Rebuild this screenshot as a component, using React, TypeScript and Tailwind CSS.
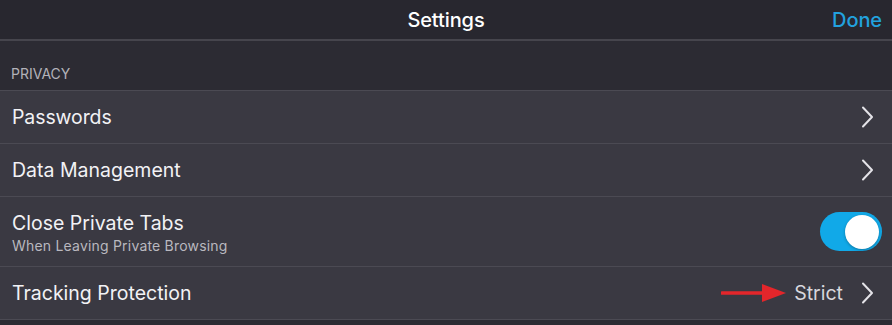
import React from "react";

function Chevron() {
  return (
    <svg width="13" height="22" viewBox="0 0 13 22" fill="none" className="shrink-0">
      <path d="M2 1.5 L11 11 L2 20.5" stroke="#e4e3e8" strokeWidth="2" strokeLinecap="round" strokeLinejoin="round" />
    </svg>
  );
}

function Row({ children, h = "h-[53px]" }: { children: React.ReactNode; h?: string }) {
  return (
    <div className={`${h} border-t border-[#4b4a53] bg-[#3a3942] flex items-center pl-[12px] pr-[18px]`}>
      {children}
    </div>
  );
}

export default function App() {
  return (
    <div
      className="w-[892px] h-[325px] overflow-hidden bg-[#2c2b33] text-white"
      style={{ fontFamily: "Inter, 'Noto Sans', sans-serif" }}
    >
      <div className="h-[39px] bg-[#28272f] grid grid-cols-[1fr_auto_1fr] items-center">
        <div />
        <div className="text-[20px] font-medium text-white tracking-[-0.1px]">Settings</div>
        <div className="justify-self-end pr-[10px] text-[20px] font-medium text-[#22a2df] tracking-[-0.1px]">Done</div>
      </div>
      <div className="h-[2px] bg-[#46454d]" />
      <div className="h-[49px] flex items-end pb-[6px] pl-[11px] text-[14px] text-[#b3b2b9]">PRIVACY</div>
      <Row>
        <span className="text-[19.5px] pt-[2px] text-[#f2f2f5] flex-1 tracking-[-0.1px]">Passwords</span>
        <Chevron />
      </Row>
      <Row>
        <span className="text-[19.5px] pt-[2px] text-[#f2f2f5] flex-1">Data Management</span>
        <Chevron />
      </Row>
      <Row h="h-[70px]">
        <div className="flex-1 flex flex-col pt-[2px]">
          <span className="text-[19.5px] leading-[24px] text-[#f2f2f5]">Close Private Tabs</span>
          <span className="text-[14px] leading-[18px] mt-[2px] text-[#b9b8bf] tracking-[0.2px]">When Leaving Private Browsing</span>
        </div>
        <div className="w-[62px] h-[39px] rounded-full bg-[#11a9e8] flex items-center justify-end pr-[3px] -mr-[8px]">
          <div className="w-[34px] h-[34px] rounded-full bg-white shadow-[0_1px_3px_rgba(0,0,0,0.3)]" />
        </div>
      </Row>
      <Row>
        <span className="text-[19.5px] pt-[2px] text-[#f2f2f5] flex-1">Tracking Protection</span>
        <div className="flex items-center">
          <svg width="66" height="22" viewBox="0 0 66 22" className="mr-[7px]">
            <line x1="1" y1="11" x2="44" y2="11" stroke="#e3262b" strokeWidth="3.5" strokeLinecap="round" />
            <polygon points="41,2 65,11 41,20" fill="#e3262b" />
          </svg>
          <span className="text-[19.5px] pt-[2px] text-[#d8d7dd] mr-[18px]">Strict</span>
          <Chevron />
        </div>
      </Row>
      <div className="border-t border-[#4b4a53] h-[10px] bg-[#2c2b33]" />
    </div>
  );
}
